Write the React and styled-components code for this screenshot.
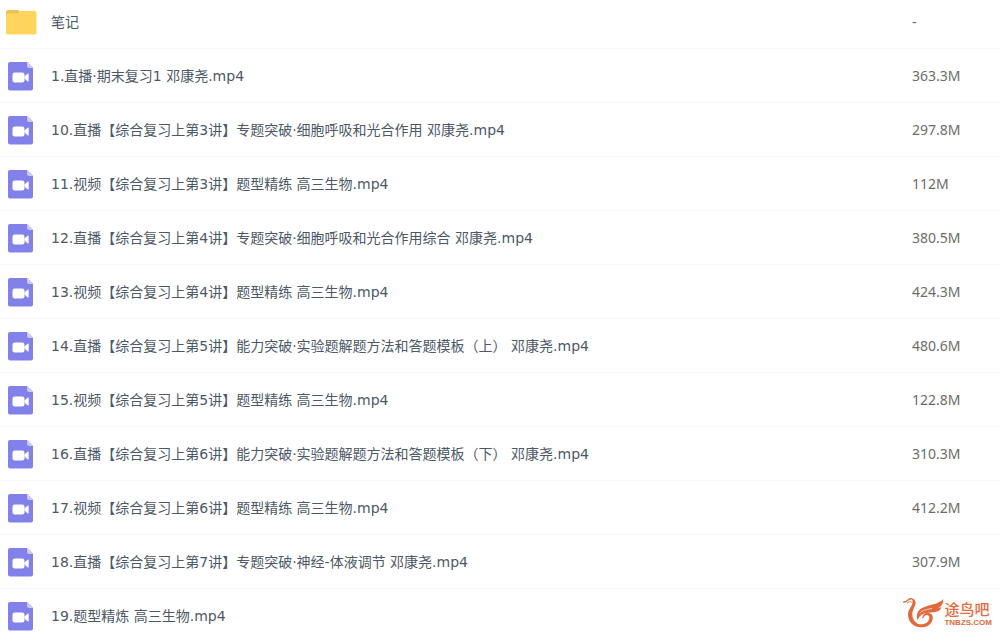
import React from 'react';
import styled, { createGlobalStyle } from 'styled-components';

const GlobalStyle = createGlobalStyle`
  * {
    box-sizing: border-box;
  }

  body {
    margin: 0;
    background: #fff;
    font-family: 'DejaVu Sans', 'Noto Sans CJK SC', sans-serif;
    font-size: 14px;
    line-height: 20px;
    color: #4c5866;
  }
`;

const Page = styled.main`
  position: relative;
  height: 100vh;
  overflow: hidden;
`;

const FileTable = styled.table`
  width: 100%;
  table-layout: fixed;
  border-collapse: separate;
  border-spacing: 0;
`;

const IconColumn = styled.col`
  width: 51px;
`;

const SizeColumn = styled.col`
  width: 88px;
`;

const Cell = styled.td`
  height: 54px;
  padding: 0;
  border-bottom: 1px solid #f7f8f9;
  vertical-align: middle;
  white-space: nowrap;
`;

const IconCell = styled(Cell)`
  padding-left: 5px;

  svg {
    display: block;
  }
`;

const SizeCell = styled(Cell)`
  font-family: 'Noto Sans', sans-serif;
  color: #6c6c6c;
`;

const Row = styled.tr`
  &:first-child ${Cell} {
    height: 49px;
    padding-bottom: 4px;
  }
`;

const FileLink = styled.a`
  color: inherit;
  text-decoration: none;
`;

const Watermark = styled.div`
  position: absolute;
  right: 8px;
  bottom: 4px;
  display: flex;
  align-items: flex-end;
  color: #e06a3c;
  pointer-events: none;
`;

const WatermarkText = styled.div`
  display: flex;
  flex-direction: column;
`;

const SiteName = styled.span`
  font-size: 15px;
  line-height: 16px;
  font-weight: 500;
`;

const SiteDomain = styled.span`
  font-family: 'Liberation Sans', sans-serif;
  font-size: 8px;
  line-height: 10px;
  font-weight: 700;
`;

const files = [
  { type: 'folder', name: '笔记', size: '-' },
  { type: 'video', name: '1.直播·期末复习1 邓康尧.mp4', size: '363.3M' },
  { type: 'video', name: '10.直播【综合复习上第3讲】专题突破·细胞呼吸和光合作用 邓康尧.mp4', size: '297.8M' },
  { type: 'video', name: '11.视频【综合复习上第3讲】题型精练 高三生物.mp4', size: '112M' },
  { type: 'video', name: '12.直播【综合复习上第4讲】专题突破·细胞呼吸和光合作用综合 邓康尧.mp4', size: '380.5M' },
  { type: 'video', name: '13.视频【综合复习上第4讲】题型精练 高三生物.mp4', size: '424.3M' },
  { type: 'video', name: '14.直播【综合复习上第5讲】能力突破·实验题解题方法和答题模板（上） 邓康尧.mp4', size: '480.6M' },
  { type: 'video', name: '15.视频【综合复习上第5讲】题型精练 高三生物.mp4', size: '122.8M' },
  { type: 'video', name: '16.直播【综合复习上第6讲】能力突破·实验题解题方法和答题模板（下） 邓康尧.mp4', size: '310.3M' },
  { type: 'video', name: '17.视频【综合复习上第6讲】题型精练 高三生物.mp4', size: '412.2M' },
  { type: 'video', name: '18.直播【综合复习上第7讲】专题突破·神经-体液调节 邓康尧.mp4', size: '307.9M' },
  { type: 'video', name: '19.题型精炼 高三生物.mp4', size: '' },
];

const FolderIcon = () => (
  <svg width="32" height="30" viewBox="0 0 32 30" aria-hidden="true">
    <path d="M1 5a2 2 0 0 1 2-2h9.500a2 2 0 0 1 1.500.700L16 6v5H1z" fill="#e8c258" />
    <path d="M1 8a1.500 1.500 0 0 1 1.500-1.500h8.500c1.200 0 1.500-.300 2.300-1l.900-.900c.400-.400.800-.600 1.400-.600H29.500a2 2 0 0 1 2 2v19.500a2 2 0 0 1-2 2H3a2 2 0 0 1-2-2z" fill="#ffd55c" />
  </svg>
);

const VideoIcon = () => (
  <svg width="32" height="30" viewBox="0 0 32 30" aria-hidden="true">
    <path d="M5 1h17l6 6v20.500a2 2 0 0 1-2 2H5a2 2 0 0 1-2-2V3a2 2 0 0 1 2-2z" fill="#8281ea" />
    <path d="M22 1l6 6h-4a2 2 0 0 1-2-2z" fill="#c9c8f8" />
    <rect x="7.500" y="11.500" width="12" height="10" rx="2.200" fill="#fff" />
    <path d="M19.500 15.500l3.300-2.900c.500-.400.900-.200.900.400v7c0 .600-.400.800-.900.400L19.500 17.500z" fill="#fff" />
  </svg>
);

const BirdLogo = () => (
  <svg width="41" height="32" viewBox="8 10 123 96" aria-hidden="true">
    {/* head and crest */}
    <path d="M10 28c7 1 9-2 13-6 7-6 17-5 19 4" fill="none" stroke="currentColor" strokeWidth="4" strokeLinecap="round" />
    <path d="M21 31c4-4 8-5 12-3" fill="none" stroke="currentColor" strokeWidth="3" strokeLinecap="round" />
    {/* neck and body */}
    <path
      d="M36 20c8 1 12 8 9 16-4 11-10 18-9 30 1 17 12 29 27 29 13 0 22-7 24-18 1-8-5-12-11-9-5 3-5 8-10 10 0-11 7-18 17-17 10 0 16 7 14 17-2 15-15 26-34 26-23 0-39-16-40-37 0-17 10-24 13-34 1-5 1-9 0-13z"
      fill="currentColor"
    />
    {/* wing */}
    <path
      d="M53 84c-8-15-2-32 14-39 20-9 46-9 62-26 0 14-5 22-15 26 4 0 7-1 10-3-4 10-10 14-19 16-16 2-31 2-41 8-7 4-11 10-11 18z"
      fill="currentColor"
    />
    <path d="M58 62c7-9 20-11 38-15" fill="none" stroke="#fff" strokeWidth="2" />
  </svg>
);

const FileRow = ({ type, name, size }) => (
  <Row>
    <IconCell>{type === 'folder' ? <FolderIcon /> : <VideoIcon />}</IconCell>
    <Cell>
      <FileLink href="#">{name}</FileLink>
    </Cell>
    <SizeCell>{size}</SizeCell>
  </Row>
);

const App = () => {
  return (
    <>
      <GlobalStyle />
      <Page>
        <FileTable>
          <colgroup>
            <IconColumn />
            <col />
            <SizeColumn />
          </colgroup>
          <tbody>
            {files.map(file => (
              <FileRow key={file.name} {...file} />
            ))}
          </tbody>
        </FileTable>
        <Watermark>
          <BirdLogo />
          <WatermarkText>
            <SiteName>途鸟吧</SiteName>
            <SiteDomain>TNBZS.COM</SiteDomain>
          </WatermarkText>
        </Watermark>
      </Page>
    </>
  );
};

export default App;
